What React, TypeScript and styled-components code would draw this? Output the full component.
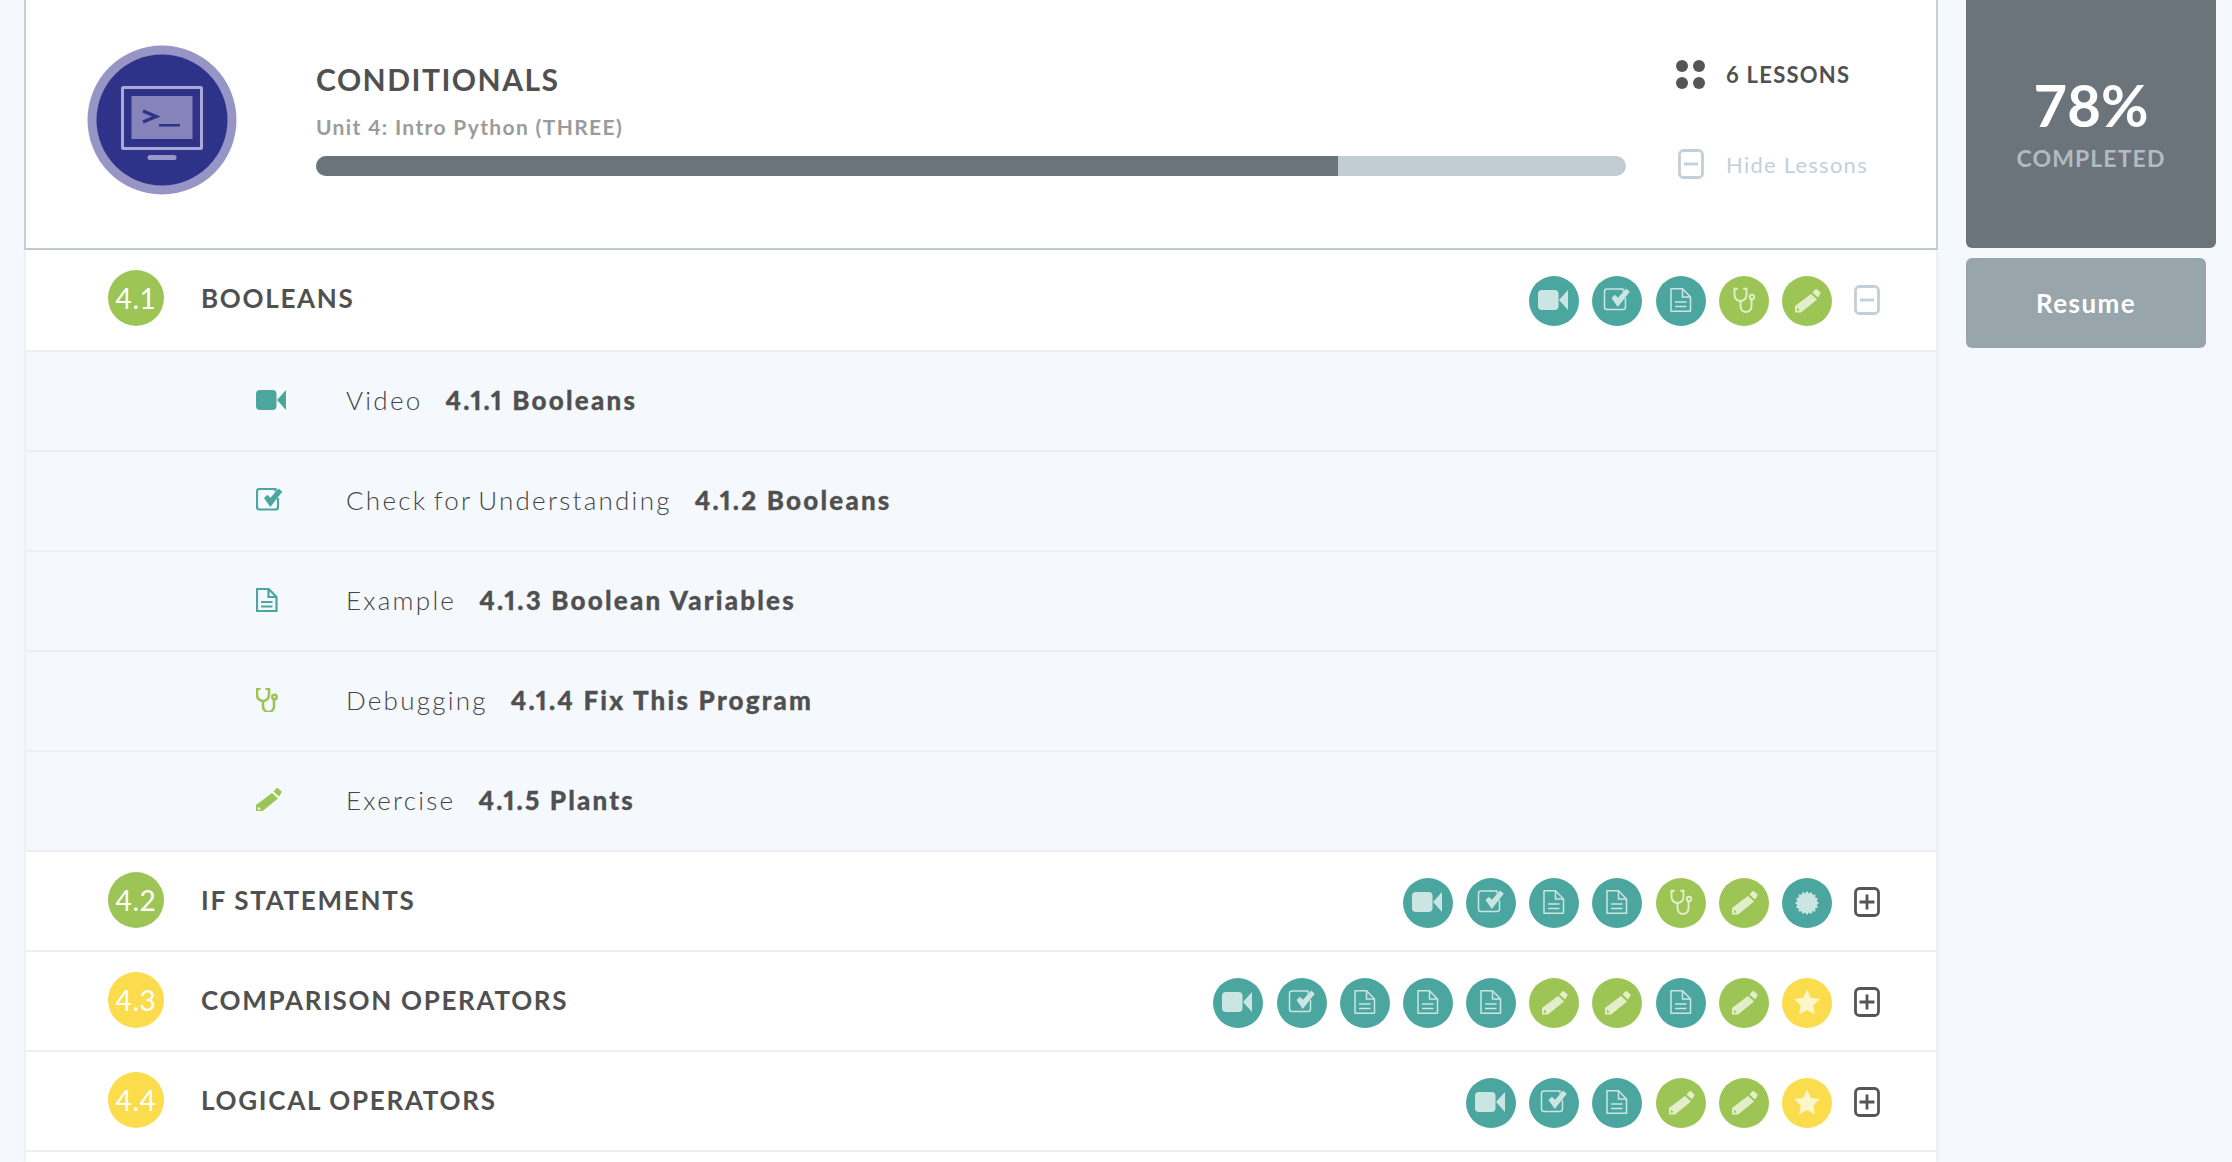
import React from "react";
import styled, {createGlobalStyle} from "styled-components";

const GlobalStyle = createGlobalStyle`
  html, body {
    margin: 0;
    height: 100%;
    background: #f5f8fd;
    font-family: "Lato", "Open Sans", sans-serif;
    color: #505050;
    overflow: hidden;
  }
`;

const Page = styled.div`
  display: flex;
  align-items: flex-start;
  height: 1162px;
  padding-left: 24px;
  box-sizing: border-box;
  overflow: hidden;
`;

const Panel = styled.main`
  width: 1914px;
  height: 1162px;
  flex: none;
`;

const Header = styled.header`
  display: flex;
  height: 250px;
  box-sizing: border-box;
  padding: 45px 0 0 61px;
  background: #fff;
  border: solid #c3cfd9;
  border-width: 0 2px 2px;
`;

const Logo = styled.svg`
  flex: none;
  width: 150px;
  height: 150px;
  margin-right: 79px;
`;

const HeaderMain = styled.div`
  width: 1310px;
  flex: none;
  padding-top: 15px;
`;

const Title = styled.h1`
  margin: 0;
  font-size: 30px;
  line-height: 38px;
  font-weight: 700;
  letter-spacing: 1.5px;
  color: #505050;
`;

const Subtitle = styled.div`
  margin-top: 17px;
  font-size: 21px;
  line-height: 24px;
  font-weight: 700;
  letter-spacing: 1.36px;
  color: #9b9b9b;
`;

const Track = styled.div`
  margin-top: 17px;
  height: 20px;
  border-radius: 10px;
  background: #c1ccd3;
  overflow: hidden;
`;

const Fill = styled.div`
  height: 100%;
  background: #6c747b;
`;

const HeaderSide = styled.div`
  margin: 14px 0 0 50px;
  display: flex;
  flex-direction: column;
  gap: 60px;
`;

const SideRow = styled.div<{$muted?: boolean}>`
  display: flex;
  align-items: center;
  gap: 21px;
  height: 30px;
  font-size: 22px;
  letter-spacing: 1.25px;
  font-weight: ${p => (p.$muted ? 400 : 700)};
  color: ${p => (p.$muted ? "#c3cfd9" : "#505050")};
`;

const Dots = styled.div`
  width: 29px;
  display: grid;
  grid-template-columns: 12px 12px;
  justify-content: space-between;
  gap: 5px;
`;

const Dot = styled.span`
  height: 12px;
  border-radius: 50%;
  background: #555;
`;

const RowList = styled.div`
  margin: 0 2px;
  height: 912px;
  box-shadow: 0 0 4px rgba(50, 70, 90, 0.12);
`;

const Row = styled.section<{$tinted?: boolean}>`
  display: flex;
  align-items: center;
  height: 100px;
  box-sizing: border-box;
  background: ${p => (p.$tinted ? "#f5f8fd" : "#fff")};
  border-top: 2px solid #eceff2;
  &:first-of-type {
    border-top: 0;
    padding-bottom: 2px;
  }
`;

const SectionBadge = styled.div<{$color: string}>`
  flex: none;
  width: 56px;
  height: 56px;
  margin: -2px 37px 0 82px;
  border-radius: 50%;
  background: ${p => p.$color};
  color: #fff;
  font-size: 28px;
  line-height: 56px;
  font-weight: 400;
  letter-spacing: 0.6px;
  text-align: center;
`;

const SectionTitle = styled.h2`
  margin: -2px 0 0;
  flex: 1;
  font-size: 26px;
  font-weight: 700;
  letter-spacing: 1.7px;
  color: #505050;
`;

const IconRun = styled.div`
  display: flex;
  gap: 13.2px;
  padding-top: 4px;
  margin-right: 22px;
`;

const IconDisc = styled.svg<{$color: string}>`
  display: block;
  flex: none;
  width: 50px;
  height: 50px;
  border-radius: 50%;
  background: ${p => p.$color};
`;

const Toggle = styled.svg`
  display: block;
  flex: none;
  width: 26px;
  height: 30px;
  margin: 1px 56px 0 0;
`;

const SideToggle = styled(Toggle)`
  margin: 0 1px 0 2px;
`;

const LessonGlyph = styled.div`
  flex: none;
  width: 90px;
  margin: -3px 0 0 230px;
  display: flex;
`;

const LessonKind = styled.span`
  margin: -2px 23px 0 0;
  font-size: 26px;
  font-weight: 300;
  letter-spacing: 2.25px;
  word-spacing: -3px;
  color: #444;
`;

const LessonName = styled.span`
  margin-top: -2px;
  font-size: 26px;
  font-weight: 900;
  font-feature-settings: "pnum";
  letter-spacing: 2.2px;
  color: #505050;
  -webkit-text-stroke: 0.3px #505050;
`;

const Aside = styled.aside`
  flex: none;
  width: 250px;
  margin-left: 28px;
`;

const ScoreCard = styled.div`
  height: 248px;
  box-sizing: border-box;
  padding-top: 74px;
  background: #6c747b;
  border-radius: 0 0 6px 6px;
  text-align: center;
`;

const ScoreValue = styled.div`
  font-size: 58px;
  line-height: 62px;
  font-weight: 700;
  color: #fff;
`;

const ScoreLabel = styled.div`
  margin-top: 8px;
  font-size: 23px;
  line-height: 28px;
  font-weight: 700;
  letter-spacing: 1.1px;
  color: #b3bac0;
`;

const ResumeButton = styled.button`
  display: block;
  width: 240px;
  height: 90px;
  margin-top: 10px;
  border: 0;
  border-radius: 6px;
  background: #98a5aa;
  color: #fff;
  font: 700 26px "Lato", sans-serif;
  letter-spacing: 1.4px;
`;

type Kind = "video" | "check" | "doc" | "scope" | "pencil" | "burst" | "star";

const TEAL = "#4ba6a0";
const GREEN = "#9dc556";
const YELLOW = "#fbdc4c";

const KIND_COLOR: Record<Kind, string> = {
    video: TEAL,
    check: TEAL,
    doc: TEAL,
    scope: GREEN,
    pencil: GREEN,
    burst: TEAL,
    star: YELLOW
};

const INK_COLOR: Record<string, string> = {
    [TEAL]: "#cbe5e3",
    [GREEN]: "#e3efcb",
    [YELLOW]: "#fdf5cb"
};

const burstPoints = () => {
    const points: string[] = [];
    for (let i = 0; i < 32; i++) {
        const r = i % 2 ? 9.8 : 12;
        const a = (i * Math.PI) / 16;
        points.push(`${(25 + r * Math.cos(a)).toFixed(2)},${(25 + r * Math.sin(a)).toFixed(2)}`);
    }
    return points.join(" ");
};

// every glyph is drawn in the 50x50 box of its disc
const Glyph = ({kind, ink, heavy}: {kind: Kind; ink: string; heavy?: boolean}) => {
    const line = heavy ? 2.2 : 1.5;
    switch (kind) {
        case "video":
            return (
                <g fill={ink}>
                    <rect x="9" y="14" width="20.5" height="20" rx="4"/>
                    <path d="M30 24 39 14v20z"/>
                </g>
            );
        case "check":
            return (
                <g>
                    <path d="M31 15.500V13H15a2.500 2.500 0 0 0-2.500 2.500V31a2.500 2.500 0 0 0 2.500 2.500h16a2.500 2.500 0 0 0 2.500-2.500v-9"
                          fill="none" stroke={ink} strokeWidth={line}/>
                    <path d="M19.500 22l3.500-3.200 3 3L34 12.500l3.800 3.200L25.800 31z" fill={ink}/>
                </g>
            );
        case "doc":
            return (
                <g fill="none" stroke={ink} strokeWidth={line}>
                    <path d="M15 12.800h11.500l8 8.200v14.200H15z" strokeLinejoin="round"/>
                    <path d="M26.500 13v8h8M19 26h11.500M19 30.500h11.500"/>
                </g>
            );
        case "scope":
            return (
                <g fill="none" stroke={ink} strokeWidth={line + 0.4} strokeLinecap="round">
                    <path d="M18 12.800h-2.500V19a6 6 0 0 0 12 0v-6.200H25"/>
                    <path d="M21.500 25v5.500a5.500 5.500 0 0 0 11 0v-7"/>
                    <circle cx="33" cy="21" r="2.200"/>
                </g>
            );
        case "pencil":
            return (
                <g fill={ink}>
                    <path d="M29 18l6 5.500L19 36.500h-6v-6.500z"/>
                    <path d="M30.500 16.500l2.700-3a1.500 1.500 0 0 1 2.100-.1l2.800 2.600a1.500 1.500 0 0 1 .1 2.100l-2.200 3.400z"/>
                    <path d="M15 31.500l2.800 2.800-3 .6z" fill={heavy ? "#f5f8fd" : GREEN}/>
                </g>
            );
        case "burst":
            return <polygon points={burstPoints()} fill={ink}/>;
        case "star":
            return <path d="M25 11.500l3.900 8.600 9.100 1-6.800 6.300 1.900 9.200L25 32l-8.100 4.600 1.900-9.200-6.800-6.300 9.100-1z" fill={ink}/>;
    }
};

const Disc = ({kind}: {kind: Kind}) => {
    const color = KIND_COLOR[kind];
    return (
        <IconDisc $color={color} viewBox="0 0 50 50">
            <Glyph kind={kind} ink={INK_COLOR[color]}/>
        </IconDisc>
    );
};

const GLYPH_BOX: Record<string, [number, number, number, number]> = {
    video: [9, 14, 30, 20],
    check: [11.500, 12, 26.500, 23],
    doc: [14, 12, 21.500, 24],
    scope: [14.500, 12, 21.500, 24],
    pencil: [13, 13, 25.500, 23.500]
};

const LessonIcon = ({kind}: {kind: Kind}) => {
    const [x, y, w, h] = GLYPH_BOX[kind];
    return (
        <svg width={w} height={h} viewBox={`${x} ${y} ${w} ${h}`} style={{display: "block"}}>
            <Glyph kind={kind} ink={KIND_COLOR[kind]} heavy/>
        </svg>
    );
};

const BoxToggle = ({open, muted, as}: {open: boolean; muted: boolean; as?: typeof SideToggle}) => {
    const Shape = as ?? Toggle;
    const stroke = muted ? "#c3cfd9" : "#555";
    return (
        <Shape viewBox="0 0 26 30">
            <rect x="1.500" y="1.500" width="23" height="27" rx="4" fill="none" stroke={stroke} strokeWidth="2.800"/>
            <path d={open ? "M6 15h14" : "M5.500 15h15M13 7.500v15"} stroke={stroke} strokeWidth="2.800"/>
        </Shape>
    );
};

const LESSONS: Array<{kind: Kind; label: string; name: string}> = [
    {kind: "video", label: "Video", name: "4.1.1 Booleans"},
    {kind: "check", label: "Check for Understanding", name: "4.1.2 Booleans"},
    {kind: "doc", label: "Example", name: "4.1.3 Boolean Variables"},
    {kind: "scope", label: "Debugging", name: "4.1.4 Fix This Program"},
    {kind: "pencil", label: "Exercise", name: "4.1.5 Plants"}
];

const SECTIONS: Array<{num: string; title: string; color: string; kinds: Kind[]; open?: boolean}> = [
    {num: "4.1", title: "BOOLEANS", color: GREEN, kinds: ["video", "check", "doc", "scope", "pencil"], open: true},
    {num: "4.2", title: "IF STATEMENTS", color: GREEN, kinds: ["video", "check", "doc", "doc", "scope", "pencil", "burst"]},
    {num: "4.3", title: "COMPARISON OPERATORS", color: YELLOW, kinds: ["video", "check", "doc", "doc", "doc", "pencil", "pencil", "doc", "pencil", "star"]},
    {num: "4.4", title: "LOGICAL OPERATORS", color: YELLOW, kinds: ["video", "check", "doc", "pencil", "pencil", "star"]}
];

const App = () => {
    const progress = 78;

    return (
        <Page>
            <GlobalStyle/>
            <Panel>
                <Header>
                    <Logo viewBox="0 0 150 150">
                        <circle cx="75" cy="75" r="74.500" fill="#9794c6"/>
                        <circle cx="75" cy="75" r="65.500" fill="#2e3389"/>
                        <rect x="35.500" y="42.500" width="79" height="61" rx="1" fill="none" stroke="#aaa9d8" strokeWidth="3"/>
                        <rect x="44.500" y="51" width="61" height="43" fill="#8683ba"/>
                        <path d="M56 66l13 5.500L56 77" fill="none" stroke="#2e3389" strokeWidth="3.500"/>
                        <rect x="72" y="79" width="21" height="2.500" fill="#2e3389"/>
                        <rect x="60.500" y="110" width="29" height="5" rx="2.500" fill="#9a98cb"/>
                    </Logo>
                    <HeaderMain>
                        <Title>CONDITIONALS</Title>
                        <Subtitle>Unit 4: Intro Python (THREE)</Subtitle>
                        <Track>
                            <Fill style={{width: `${progress}%`}}/>
                        </Track>
                    </HeaderMain>
                    <HeaderSide>
                        <SideRow>
                            <Dots>
                                <Dot/><Dot/><Dot/><Dot/>
                            </Dots>
                            6 LESSONS
                        </SideRow>
                        <SideRow $muted>
                            <BoxToggle open muted as={SideToggle}/>
                            Hide Lessons
                        </SideRow>
                    </HeaderSide>
                </Header>
                <RowList>
                    {SECTIONS.map(section => (
                        <React.Fragment key={section.num}>
                            <Row>
                                <SectionBadge $color={section.color}>{section.num}</SectionBadge>
                                <SectionTitle>{section.title}</SectionTitle>
                                <IconRun>
                                    {section.kinds.map((kind, i) => <Disc key={i} kind={kind}/>)}
                                </IconRun>
                                <BoxToggle open={!!section.open} muted={!!section.open}/>
                            </Row>
                            {section.open && LESSONS.map(lesson => (
                                <Row key={lesson.name} $tinted>
                                    <LessonGlyph><LessonIcon kind={lesson.kind}/></LessonGlyph>
                                    <LessonKind>{lesson.label}</LessonKind>
                                    <LessonName>{lesson.name}</LessonName>
                                </Row>
                            ))}
                        </React.Fragment>
                    ))}
                    <Row/>
                </RowList>
            </Panel>
            <Aside>
                <ScoreCard>
                    <ScoreValue>{progress}%</ScoreValue>
                    <ScoreLabel>COMPLETED</ScoreLabel>
                </ScoreCard>
                <ResumeButton>Resume</ResumeButton>
            </Aside>
        </Page>
    );
};

export default App;
